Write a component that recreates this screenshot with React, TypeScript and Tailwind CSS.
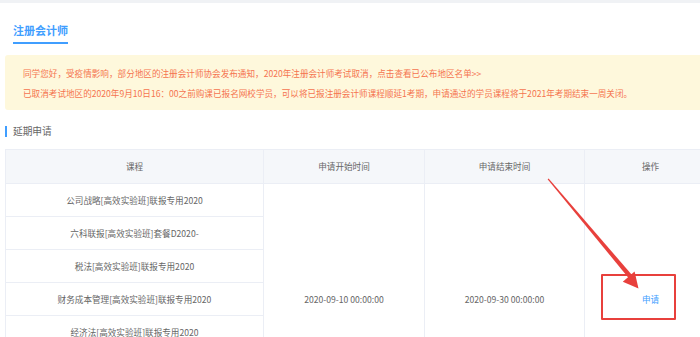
import React from 'react';

const courses = [
  '公司战略[高效实验班]联报专用2020',
  '六科联报[高效实验班]套餐D2020-',
  '税法[高效实验班]联报专用2020',
  '财务成本管理[高效实验班]联报专用2020',
  '经济法[高效实验班]联报专用2020',
  '会计[高效实验班]联报专用2020',
  '审计[高效实验班]联报专用2020',
];

const font = { fontFamily: '"Microsoft YaHei", "Noto Sans CJK SC", "Noto Sans", sans-serif' };

const App: React.FC = () => {
  return (
    <div className="relative w-[700px] h-[337px] overflow-hidden bg-white" style={font}>
      {/* top strip */}
      <div className="h-[3px] bg-[#f0f2f5]" />

      {/* Tab title */}
      <div className="flex pl-[13px] pt-[20px]">
        <span className="block text-[11px] leading-[14px] font-bold text-[#409eff] pb-[5px] border-b-2 border-[#409eff]">
          注册会计师
        </span>
      </div>

      {/* Notice */}
      <div className="ml-[5px] mt-[11px] w-[720px] h-[55px] rounded-[3px] bg-[#fef8dc] pl-[18px] pt-[8px] text-[8.6px] leading-[20px] text-[#f5744f] whitespace-nowrap">
        <p>同学您好，受疫情影响，部分地区的注册会计师协会发布通知，2020年注册会计师考试取消，点击查看已公布地区名单&gt;&gt;</p>
        <p>已取消考试地区的2020年9月10日16：00之前购课已报名网校学员，可以将已报注册会计师课程顺延1考期，申请通过的学员课程将于2021年考期结束一周关闭。</p>
      </div>

      {/* Section header */}
      <div className="ml-[5px] mt-[16px] flex items-center h-[11px]">
        <span className="w-[2px] h-[11px] bg-[#409eff]" />
        <span className="ml-[6px] text-[9.7px] text-[#666] leading-[11px]">延期申请</span>
      </div>

      {/* Table */}
      <table className="ml-[5px] mt-[12px] w-[711px] table-fixed border-collapse text-[8.6px] text-[#666]">
        <colgroup>
          <col className="w-[258px]" />
          <col className="w-[161px]" />
          <col className="w-[160px]" />
          <col className="w-[132px]" />
        </colgroup>
        <thead>
          <tr className="h-[34px] bg-[#f5f7fa]">
            <th className="font-normal border border-[#ebeef5]">课程</th>
            <th className="font-normal border border-[#ebeef5]">申请开始时间</th>
            <th className="font-normal border border-[#ebeef5]">申请结束时间</th>
            <th className="font-normal border border-[#ebeef5]">操作</th>
          </tr>
        </thead>
        <tbody>
          {courses.map((c, i) => (
            <tr key={c} className="h-[33px]">
              <td className="text-center border border-[#ebeef5]">{c}</td>
              {i === 0 && (
                <>
                  <td rowSpan={courses.length} className="text-center border border-[#ebeef5]">
                    2020-09-10 00:00:00
                  </td>
                  <td rowSpan={courses.length} className="text-center border border-[#ebeef5]">
                    2020-09-30 00:00:00
                  </td>
                  <td rowSpan={courses.length} className="text-center border border-[#ebeef5]">
                    <a className="text-[#409eff] cursor-pointer">申请</a>
                  </td>
                </>
              )}
            </tr>
          ))}
        </tbody>
      </table>

      {/* Annotation: red box + arrow */}
      <div className="absolute left-[601px] top-[274px] w-[75px] h-[46px] border-2 border-[#e8403c] rounded-[1px]" />
      <svg className="absolute left-0 top-0 pointer-events-none" width="700" height="337">
        <polygon
          points="547.6,179.3 548.6,178.5 632,275 628.6,278"
          fill="#e8403c"
        />
        <polygon points="638.5,288.5 622.8,281.8 634.6,271.6" fill="#e8403c" />
      </svg>
    </div>
  );
};

export default App;
